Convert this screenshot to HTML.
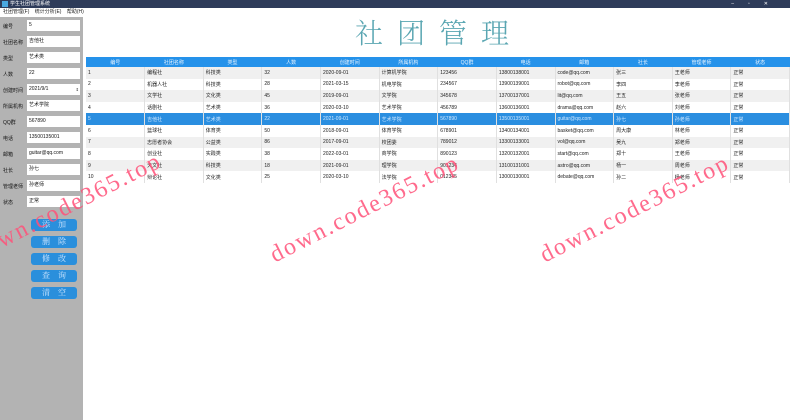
<!DOCTYPE html>
<html><head><meta charset="utf-8"><style>
*{margin:0;padding:0;box-sizing:border-box}
body{width:790px;height:420px;overflow:hidden;background:#fff;font-family:"Liberation Sans","Noto Sans CJK SC",sans-serif;position:relative}
.tb{position:absolute;left:0;top:0;width:790px;height:8px;background:#2e3c5a;color:#fff;font-size:5px;line-height:8px;padding-left:10px}
.tb i{position:absolute;left:2px;top:1px;width:6px;height:6px;background:#4aa8e0}
.mn{position:absolute;left:0;top:8px;width:790px;height:9px;background:#fff;font-size:5px;line-height:9px;padding-left:3px;color:#222;word-spacing:4px}
.lp{position:absolute;left:0;top:17px;width:83px;height:403px;background:#b3b3b3}
.lb{position:absolute;left:3px;font-size:5px;color:#111}
.in{position:absolute;left:27px;width:53px;height:11px;background:#fff;font-size:5px;line-height:11px;padding-left:2px;color:#111}
.bt{position:absolute;left:31px;width:46px;height:12px;background:#2a8fdc;border-radius:3px;color:#cfe6ff;font-family:"Noto Serif CJK SC",serif;font-size:8px;line-height:12px;text-align:center;letter-spacing:8px;padding-left:8px}
.title{position:absolute;left:355px;top:12px;font-family:"Noto Serif CJK SC",serif;font-size:28px;color:#5aa6b2;letter-spacing:14px;font-weight:300}
table{position:absolute;left:86px;top:57px;width:704px;border-collapse:collapse;font-size:5px;table-layout:fixed}
th{background:#2592ea;color:#e8f4ff;height:10px;font-weight:normal;text-align:center}
td{height:11.6px;padding-left:2px;color:#222;border-right:1px solid #e0e0e0}
tr:nth-child(even) td{background:#f0f0f0}
tr.sel td{background:#2a8ee0;color:#d0e8ff}
.wm{position:absolute;font-family:"Liberation Serif",serif;font-size:24px;color:rgba(255,80,120,.85);transform:rotate(-27deg);transform-origin:left bottom;white-space:nowrap;letter-spacing:2px}
</style></head><body>
<div class="tb"><i></i>学生社团管理系统<span style="position:absolute;right:8px;letter-spacing:14px">–▫✕</span></div>
<div class="mn">社团管理(F) 统计分析(E) 帮助(H)</div>
<div class="lp">
<div class="lb" style="top:6px">编号</div><div class="in" style="top:3px">5</div>
<div class="lb" style="top:22px">社团名称</div><div class="in" style="top:19px">吉他社</div>
<div class="lb" style="top:38px">类型</div><div class="in" style="top:35px">艺术类</div>
<div class="lb" style="top:54px">人数</div><div class="in" style="top:51px">22</div>
<div class="lb" style="top:70px">创建时间</div><div class="in" style="top:67px">2021/9/1<span style="position:absolute;right:1px;top:0;font-size:4px">⇕</span></div>
<div class="lb" style="top:86px">所属机构</div><div class="in" style="top:83px">艺术学院</div>
<div class="lb" style="top:102px">QQ群</div><div class="in" style="top:99px">567890</div>
<div class="lb" style="top:118px">电话</div><div class="in" style="top:115px">13500135001</div>
<div class="lb" style="top:134px">邮箱</div><div class="in" style="top:131px">guitar@qq.com</div>
<div class="lb" style="top:150px">社长</div><div class="in" style="top:147px">孙七</div>
<div class="lb" style="top:166px">管理老师</div><div class="in" style="top:163px">孙老师</div>
<div class="lb" style="top:182px">状态</div><div class="in" style="top:179px">正常</div>
<div class="bt" style="top:202px">添加</div>
<div class="bt" style="top:219px">删除</div>
<div class="bt" style="top:236px">修改</div>
<div class="bt" style="top:253px">查询</div>
<div class="bt" style="top:270px">清空</div>
</div>
<div class="title">社团管理</div>
<table>
<tr><th>编号</th><th>社团名称</th><th>类型</th><th>人数</th><th>创建时间</th><th>所属机构</th><th>QQ群</th><th>电话</th><th>邮箱</th><th>社长</th><th>管理老师</th><th>状态</th></tr>
<tr><td>1</td><td>编程社</td><td>科技类</td><td>32</td><td>2020-09-01</td><td>计算机学院</td><td>123456</td><td>13800138001</td><td>code@qq.com</td><td>张三</td><td>王老师</td><td>正常</td></tr>
<tr><td>2</td><td>机器人社</td><td>科技类</td><td>28</td><td>2021-03-15</td><td>机电学院</td><td>234567</td><td>13900139001</td><td>robot@qq.com</td><td>李四</td><td>李老师</td><td>正常</td></tr>
<tr><td>3</td><td>文学社</td><td>文化类</td><td>45</td><td>2019-09-01</td><td>文学院</td><td>345678</td><td>13700137001</td><td>lit@qq.com</td><td>王五</td><td>张老师</td><td>正常</td></tr>
<tr><td>4</td><td>话剧社</td><td>艺术类</td><td>36</td><td>2020-03-10</td><td>艺术学院</td><td>456789</td><td>13600136001</td><td>drama@qq.com</td><td>赵六</td><td>刘老师</td><td>正常</td></tr>
<tr class="sel"><td>5</td><td>吉他社</td><td>艺术类</td><td>22</td><td>2021-09-01</td><td>艺术学院</td><td>567890</td><td>13500135001</td><td>guitar@qq.com</td><td>孙七</td><td>孙老师</td><td>正常</td></tr>
<tr><td>6</td><td>篮球社</td><td>体育类</td><td>50</td><td>2018-09-01</td><td>体育学院</td><td>678901</td><td>13400134001</td><td>basket@qq.com</td><td>周大康</td><td>林老师</td><td>正常</td></tr>
<tr><td>7</td><td>志愿者协会</td><td>公益类</td><td>86</td><td>2017-09-01</td><td>校团委</td><td>789012</td><td>13300133001</td><td>vol@qq.com</td><td>吴九</td><td>郑老师</td><td>正常</td></tr>
<tr><td>8</td><td>创业社</td><td>实践类</td><td>38</td><td>2022-03-01</td><td>商学院</td><td>890123</td><td>13200132001</td><td>start@qq.com</td><td>郑十</td><td>王老师</td><td>正常</td></tr>
<tr><td>9</td><td>天文社</td><td>科技类</td><td>18</td><td>2021-09-01</td><td>理学院</td><td>901234</td><td>13100131001</td><td>astro@qq.com</td><td>杨一</td><td>周老师</td><td>正常</td></tr>
<tr><td>10</td><td>辩论社</td><td>文化类</td><td>25</td><td>2020-03-10</td><td>法学院</td><td>012345</td><td>13000130001</td><td>debate@qq.com</td><td>孙二</td><td>杨老师</td><td>正常</td></tr>
</table>
<div class="wm" style="left:-20px;top:240px">down.code365.top</div>
<div class="wm" style="left:278px;top:242px">down.code365.top</div>
<div class="wm" style="left:548px;top:242px">down.code365.top</div>
</body></html>
